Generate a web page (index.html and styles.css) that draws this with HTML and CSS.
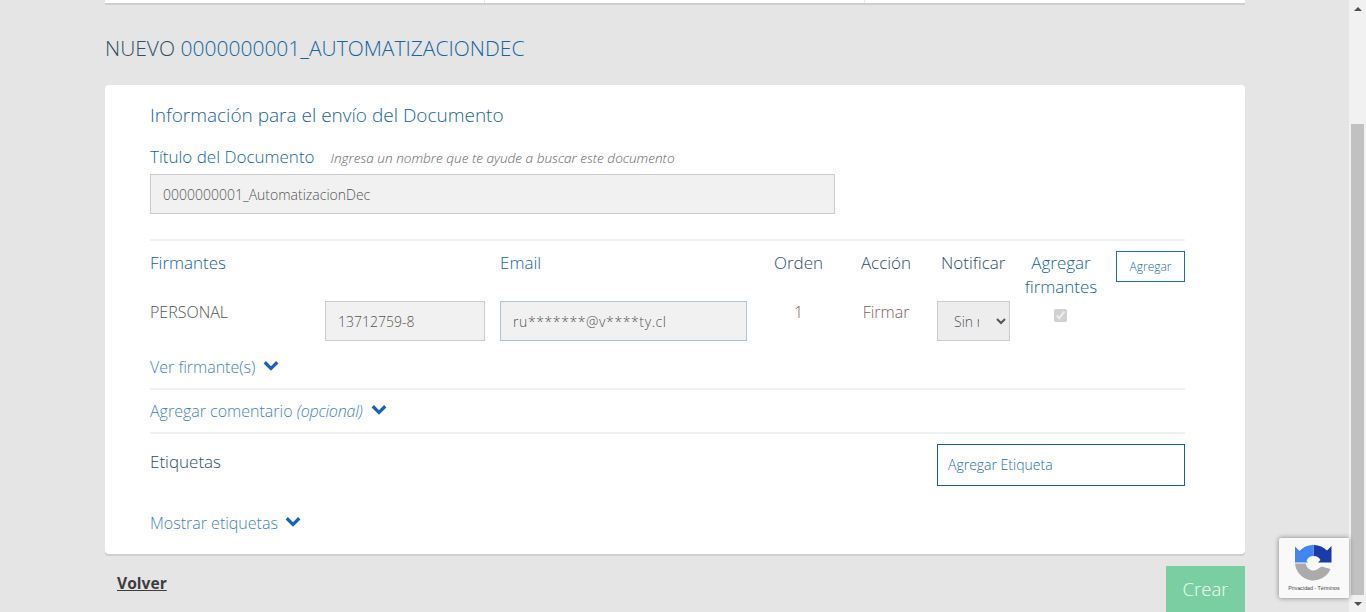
FILE: index.html
```html
<!DOCTYPE html>
<html lang="es">
<head>
<meta charset="utf-8">
<title>Nuevo documento</title>
<link rel="stylesheet" href="styles.css">
</head>
<body>
<div class="shell">
  <main class="page">
    <div class="wrap">
      <div class="top-strip"><span></span><span></span><span></span></div>
      <h1 class="page-title"><span class="dark">NUEVO</span> 0000000001_AUTOMATIZACIONDEC</h1>
      <section class="card">
        <h2 class="section-title">Información para el envío del Documento</h2>
        <div class="title-label"><label class="label">Título del Documento</label><em class="hint">Ingresa un nombre que te ayude a buscar este documento</em></div>
        <input class="field field-title" value="0000000001_AutomatizacionDec" disabled>
        <hr class="rule rule-first">
        <div class="signers">
          <div class="head">Firmantes</div>
          <div></div>
          <div class="head">Email</div>
          <div class="head center head-dark">Orden</div>
          <div class="head center head-dark">Acción</div>
          <div class="head head-dark notif">Notificar</div>
          <div class="head center">Agregar firmantes</div>
          <div class="add-cell"><button class="btn-add" type="button">Agregar</button></div>

          <div class="cell-text">PERSONAL</div>
          <div><input class="field field-rut" value="13712759-8" disabled></div>
          <div><input class="field field-mail" value="ru*******@v****ty.cl" disabled></div>
          <div class="cell-text center accent">1</div>
          <div class="cell-text center accent">Firmar</div>
          <div><select class="field-select" disabled><option>Sin notificar</option></select></div>
          <div class="center"><input class="check" type="checkbox" checked disabled></div>
          <div></div>
        </div>
        <a class="toggle toggle-signers">Ver firmante(s)
          <svg class="chev" viewBox="0 0 16 11"><path d="M0.6 3.4 2.9 1.1 8 6.2 13.1 1.1 15.4 3.4 8 10.8Z"/></svg></a>
        <hr class="rule rule-a">
        <a class="toggle toggle-comment">Agregar comentario <i>(opcional)</i>
          <svg class="chev" viewBox="0 0 16 11"><path d="M0.6 3.4 2.9 1.1 8 6.2 13.1 1.1 15.4 3.4 8 10.8Z"/></svg></a>
        <hr class="rule rule-b">
        <div class="tags">
          <div class="tags-label">Etiquetas</div>
          <input class="tag-input" placeholder="Agregar Etiqueta">
        </div>
        <a class="toggle toggle-tags">Mostrar etiquetas
          <svg class="chev" viewBox="0 0 16 11"><path d="M0.6 3.4 2.9 1.1 8 6.2 13.1 1.1 15.4 3.4 8 10.8Z"/></svg></a>
      </section>
      <div class="actions">
        <a class="back">Volver</a>
        <button class="btn-create" type="button">Crear</button>
      </div>
    </div>
  </main>
  <div class="scrollbar">
    <div class="arrow arrow-up"></div>
    <div class="track"><div class="thumb"></div></div>
    <div class="arrow arrow-down"></div>
  </div>
  <aside class="recaptcha">
    <svg class="rc-logo" viewBox="0 0 37 37">
      <path fill="#1c3aa9" d="M18.500 0A18.500 18.500 0 0 1 32 5.500L36.500 1V17.500H23L25.500 15A7.500 7.500 0 0 0 18.500 11Z"/>
      <path fill="#4285f4" d="M18.500 0V11A7.500 7.500 0 0 0 11.500 16L13 17.500H0V1.500L4.500 6A18.500 18.500 0 0 1 18.500 0Z"/>
      <path fill="#ababab" d="M0 18.500H11A7.500 7.500 0 0 0 23.500 23.500L26.500 21.500L35.500 24A18.500 18.500 0 0 1 0 18.500Z"/>
    </svg>
    <div class="rc-text">Privacidad - Términos</div>
  </aside>
</div>
</body>
</html>
```
FILE: styles.css
```css
* { box-sizing: border-box; }
html, body { margin: 0; padding: 0; height: 100%; overflow: hidden; }
body {
  background: #e5e5e5;
  font-family: "Open Sans", sans-serif;
  font-weight: 300;
  color: #555;
}
.shell { position: relative; display: flex; height: 612px; overflow: hidden; }
.page { flex: 1; min-width: 0; overflow: hidden; }
.wrap { width: 1140px; margin-left: 105px; }

.top-strip {
  display: grid;
  grid-template-columns: 380px 380px 380px;
  height: 5px;
  background: #fff;
  border-bottom: 2px solid #cfcfcf;
}
.top-strip span { border-right: 1px solid #e8e8e8; }
.top-strip span:last-child { border-right: 0; }

.page-title {
  margin: 29px 0 0;
  height: 51px;
  font-size: 21px;
  line-height: 28px;
  font-weight: 300;
  color: #15659f;
}
.dark { color: #2f4f69; }

.card {
  background: #fff;
  height: 469px;
  border-radius: 4px;
  box-shadow: 0 2px 0 #cfcfcf;
  padding: 0 60px 0 45px;
  display: flow-root;
}
.section-title {
  margin: 17px 0 0;
  font-size: 19px;
  line-height: 26px;
  font-weight: 300;
  color: #15659f;
}
.title-label { display: flex; align-items: baseline; margin-top: 16px; height: 26px; line-height: 26px; }
.label { font-size: 17px; color: #15659f; }
.hint { font-size: 13.6px; margin-left: 16px; color: #666; font-style: italic; }

.field {
  display: block;
  height: 40px;
  padding: 0 12px;
  border: 1px solid #ccc;
  background: #f1f1f1;
  font: 300 14px "Open Sans", sans-serif;
  color: #555;
  opacity: 1;
  -webkit-text-fill-color: #555;
}
.field-title { width: 685px; margin-top: 4px; }
.field-rut { width: 160px; }
.field-mail { width: 247px; border-color: #aec6da; letter-spacing: 0.6px; }

.rule { margin: 0; border: 0; height: 2px; background: #f1f1f1; }
.rule-first { margin-top: 25px; }
.rule-a { margin-top: 9px; }
.rule-b { margin-top: 9px; }

.signers {
  display: grid;
  grid-template-columns: 175px 175px 262px 73px 102px 87px 74px 87px;
  grid-template-rows: 60px 52px;
}
.head { font-size: 17px; line-height: 24px; color: #15659f; padding-top: 10px; }
.head-dark { color: #2f4f69; }
.notif { white-space: nowrap; padding-left: 4px; }
.center { text-align: center; }
.add-cell { display: flex; justify-content: flex-end; padding-top: 10px; }
.btn-add {
  width: 69px;
  height: 31px;
  padding: 0;
  background: #fff;
  border: 1px solid #1d6eb4;
  font: 300 12px "Open Sans", sans-serif;
  color: #1d6eb4;
}
.cell-text { font-size: 16px; line-height: 22px; }
.accent { color: #7d5f5f; }
.field-select {
  display: block;
  width: 73px;
  height: 40px;
  padding: 0 14px 0 12px;
  border: 1px solid #ccc;
  background: #ededed;
  font: 300 14px "Open Sans", sans-serif;
  color: #555;
  opacity: 1;
}
.check { margin: 8px 1px 0 0; width: 13px; height: 13px; }

.toggle { display: block; font-size: 16px; line-height: 24px; color: #3f84c4; }
.toggle i { font-style: italic; letter-spacing: -0.2px; }
.chev { width: 16px; height: 11px; fill: #1a62b8; margin-left: 3px; vertical-align: 2px; }
.toggle-signers { margin-top: 2px; height: 24px; }
.toggle-comment { margin-top: 9px; height: 24px; }
.toggle-comment .chev { margin-left: 4px; }

.tags { display: flex; justify-content: space-between; margin-top: 10px; height: 42px; }
.tags-label { font-size: 17px; line-height: 36px; color: #2f4f69; }
.tag-input {
  width: 248px;
  height: 42px;
  padding: 0 10px 2px;
  border: 1px solid #1d5c99;
  background: #fff;
  font: 300 14px "Open Sans", sans-serif;
  color: #1d6eb4;
  outline: 0;
}
.tag-input::placeholder { color: #1d6eb4; opacity: 1; }
.toggle-tags { margin-top: 25px; }

.actions { display: flex; justify-content: space-between; padding: 12px 0 0 12px; }
.back {
  font-size: 15.6px;
  line-height: 34px;
  font-weight: 700;
  color: #3d3d3d;
  text-decoration: underline;
}
.btn-create {
  width: 79px;
  height: 46px;
  padding: 0 0 2px;
  border: 0;
  background: #7acfa2;
  color: #f2fbf6;
  font: 300 18.5px "Open Sans", sans-serif;
}

.scrollbar { width: 17px; flex: none; background: #f1f1f1; display: flex; flex-direction: column; }
.arrow { height: 17px; flex: none; display: flex; justify-content: center; align-items: center; }
.arrow::before { content: ""; width: 0; height: 0; border-left: 4px solid transparent; border-right: 4px solid transparent; }
.arrow-up::before { border-bottom: 4px solid #505050; }
.arrow-down::before { border-top: 4px solid #505050; }
.track { flex: 1; padding-top: 107px; }
.thumb { height: 471px; margin: 0 2px; background: #c1c1c1; }

.recaptcha {
  position: absolute;
  left: 1279px;
  top: 538px;
  width: 70px;
  height: 60px;
  background: #f9f9f9;
  border-radius: 2px 0 0 2px;
  box-shadow: 0 0 5px rgba(0,0,0,.45);
  text-align: center;
}
.rc-logo { display: block; width: 37px; height: 37px; margin: 7px 0 0 16px; }
.rc-text { margin-top: 2px; font: 400 5.3px/8px "Liberation Sans", sans-serif; color: #444; white-space: nowrap; }
```
